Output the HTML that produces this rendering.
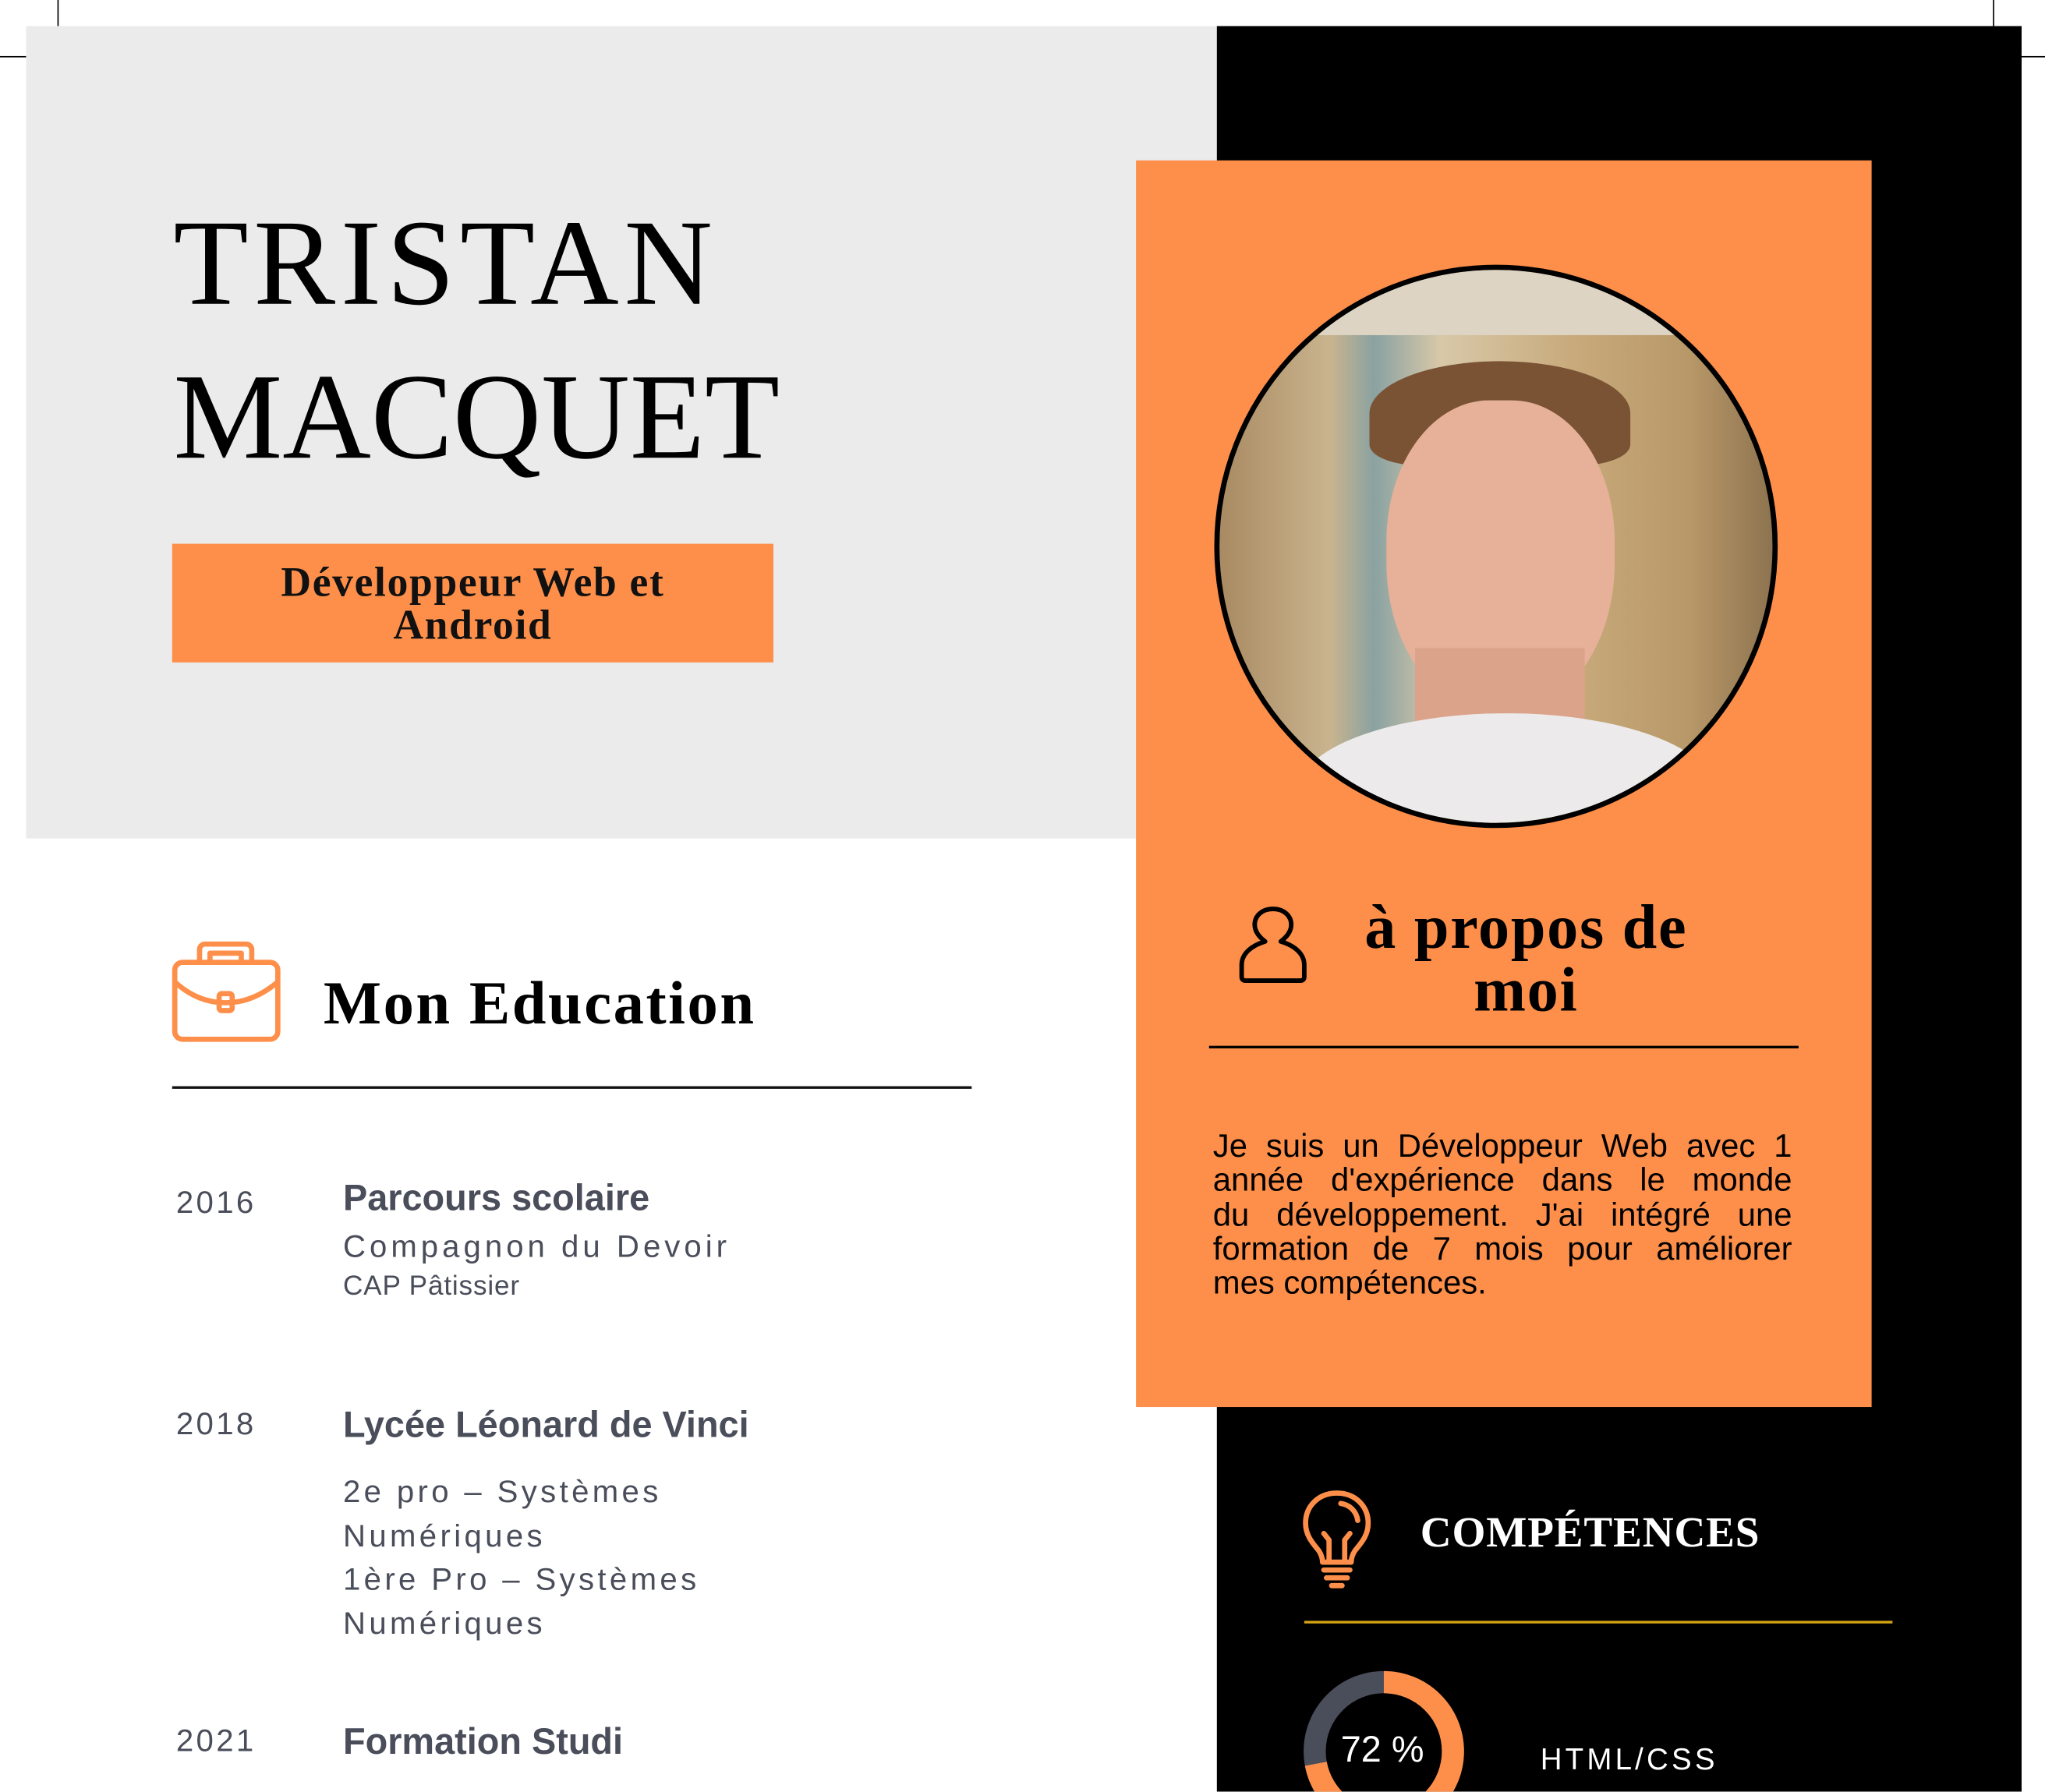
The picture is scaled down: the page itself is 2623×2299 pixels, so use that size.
<!DOCTYPE html>
<html><head><meta charset="utf-8">
<style>
html,body{margin:0;padding:0;background:#fff;}
body{width:2623px;height:2299px;overflow:hidden;position:relative;}
#w{position:absolute;left:0;top:0;width:1568px;height:1374px;overflow:hidden;transform:scale(1.6729);transform-origin:0 0;}
.a{position:absolute;}
.serif{font-family:"Liberation Serif",serif;}
.sans{font-family:"Liberation Sans",sans-serif;}
.g{color:#4a4d5a;}
.j{text-align:justify;text-align-last:justify;white-space:nowrap;}
</style></head><body><div id="w">
<div class="a" style="left:44px;top:0;width:1px;height:20px;background:#000"></div>
<div class="a" style="left:0;top:43px;width:20px;height:1px;background:#000"></div>
<div class="a" style="left:1528px;top:0;width:1px;height:20px;background:#000"></div>
<div class="a" style="left:1550px;top:43px;width:18px;height:1px;background:#000"></div>

<div class="a" style="left:20px;top:20px;width:913px;height:623px;background:#ebebeb"></div>
<div class="a" style="left:933px;top:20px;width:617px;height:1354px;background:#000"></div>
<div class="a" style="left:871px;top:123px;width:564px;height:956px;background:#fe8f4a"></div>

<div class="a serif" style="left:133px;top:143px;font-size:94px;line-height:118px;letter-spacing:2px;color:#000"><span style="letter-spacing:4px">TRISTAN</span><br><span style="letter-spacing:0px">MACQUET</span></div>

<div class="a serif" style="left:132px;top:417px;width:461px;height:91px;background:#fe8f4a;display:flex;align-items:center;justify-content:center;text-align:center;font-weight:bold;font-size:32px;line-height:33px;letter-spacing:1px;color:#111">Développeur Web et<br>Android</div>

<div class="a" style="left:931px;top:203px;width:424px;height:424px;border:4px solid #000;border-radius:50%;overflow:hidden;background:linear-gradient(90deg,#a98a62 0%,#c9b48e 20%,#8aa2a2 28%,#d8c8a8 40%,#c7a97a 65%,#b89868 85%,#8d7350 100%)">
  <div class="a" style="left:0;top:0;width:424px;height:50px;background:#ddd4c4"></div>
  <div class="a" style="left:115px;top:70px;width:200px;height:80px;border-radius:50% 50% 20% 20%;background:#7a5234"></div>
  <div class="a" style="left:128px;top:100px;width:175px;height:240px;border-radius:45% 45% 48% 48%;background:#e6b198"></div>
  <div class="a" style="left:150px;top:290px;width:130px;height:80px;background:#dba38a"></div>
  <div class="a" style="left:60px;top:340px;width:320px;height:120px;border-radius:50% 50% 0 0;background:#eceaea"></div>
</div>

<svg class="a" style="left:948px;top:693px" width="56" height="62" viewBox="0 0 56 62"><path d="M28 4c-9 0-14 6-14 12 0 6 4 10 8 13-10 3-18 9-18 18v9c0 2 1 3 3 3h42c2 0 3-1 3-3v-9c0-9-8-15-18-18 4-3 8-7 8-13 0-6-5-12-14-12z" fill="none" stroke="#000" stroke-width="3.5" stroke-linejoin="round"/></svg>
<div class="a serif" style="left:1010px;top:688px;width:320px;text-align:center;font-size:48px;font-weight:bold;line-height:48px;letter-spacing:1px;color:#000">à propos de<br>moi</div>
<div class="a" style="left:927px;top:802px;width:452px;height:2px;background:#000"></div>
<div class="a sans" style="left:930px;top:866px;width:444px;font-size:25px;line-height:26.3px;color:#000">
<div class="j">Je suis un Développeur Web avec 1</div>
<div class="j">année d'expérience dans le monde</div>
<div class="j">du développement. J'ai intégré une</div>
<div class="j">formation de 7 mois pour améliorer</div>
<div>mes compétences.</div>
</div>

<svg class="a" style="left:130px;top:721px" width="88" height="80" viewBox="0 0 88 80"><g fill="none" stroke="#fe8f4a" stroke-width="4" stroke-linejoin="round"><rect x="4" y="17" width="79" height="59" rx="6"/><path d="M23 17V7c0-2 2-4 4-4h32c2 0 4 2 4 4v10M31 17v-7h24v7"/><path d="M4 32c12 11 25 16 39 16s27-5 40-16"/><rect x="38" y="41" width="10" height="13" rx="2"/></g></svg>
<div class="a serif" style="left:248px;top:742px;font-size:47px;font-weight:bold;letter-spacing:1.5px;color:#000;line-height:56px">Mon Education</div>
<div class="a" style="left:132px;top:833px;width:613px;height:2px;background:#111"></div>

<div class="a sans g" style="left:135px;top:909px;font-size:24px;letter-spacing:2px">2016</div>
<div class="a sans g" style="left:263px;top:903px;font-size:28px;font-weight:bold">Parcours scolaire</div>
<div class="a sans g" style="left:263px;top:943px;font-size:24px;letter-spacing:3px">Compagnon du Devoir</div>
<div class="a sans g" style="left:263px;top:975px;font-size:21px;letter-spacing:0.5px">CAP Pâtissier</div>

<div class="a sans g" style="left:135px;top:1079px;font-size:24px;letter-spacing:2px">2018</div>
<div class="a sans g" style="left:263px;top:1077px;font-size:28px;font-weight:bold">Lycée Léonard de Vinci</div>
<div class="a sans g" style="left:263px;top:1128px;font-size:24px;letter-spacing:2.6px;line-height:33.7px">2e pro – Systèmes<br>Numériques<br>1ère Pro – Systèmes<br>Numériques</div>

<div class="a sans g" style="left:135px;top:1322px;font-size:24px;letter-spacing:2px">2021</div>
<div class="a sans g" style="left:263px;top:1320px;font-size:28px;font-weight:bold">Formation Studi</div>

<svg class="a" style="left:996px;top:1141px" width="58" height="78" viewBox="0 0 58 78"><g fill="none" stroke="#fe8f4a" stroke-width="4" stroke-linecap="round" stroke-linejoin="round"><path d="M29 4C15 4 5 14 5 27c0 10 6 16 10 21 2 3 3 6 3 9h22c0-3 1-6 3-9 4-5 10-11 10-21C53 14 43 4 29 4z"/><path d="M19 63h20M21 69h16M25 75h8"/><path d="M23 57V40l-4-5M35 57V40l4-5"/><path d="M32 12c7 1 12 6 13 13"/></g></svg>
<div class="a serif" style="left:1089px;top:1158px;font-size:33px;font-weight:bold;color:#fff;letter-spacing:0.5px">COMPÉTENCES</div>
<div class="a" style="left:1000px;top:1243px;width:451px;height:2px;background:#d4a514"></div>

<svg class="a" style="left:998px;top:1280px" width="126" height="126" viewBox="0 0 126 126"><circle cx="63" cy="63" r="53" fill="none" stroke="#4a4d5a" stroke-width="17"/><circle cx="63" cy="63" r="53" fill="none" stroke="#fe8f4a" stroke-width="17" stroke-dasharray="240 333" transform="rotate(-90 63 63)"/></svg>
<div class="a sans" style="left:1028px;top:1326px;font-size:28px;color:#fff">72 %</div>
<div class="a sans" style="left:1181px;top:1336px;font-size:23px;color:#fff;letter-spacing:2.5px">HTML/CSS</div>
</div></body></html>
